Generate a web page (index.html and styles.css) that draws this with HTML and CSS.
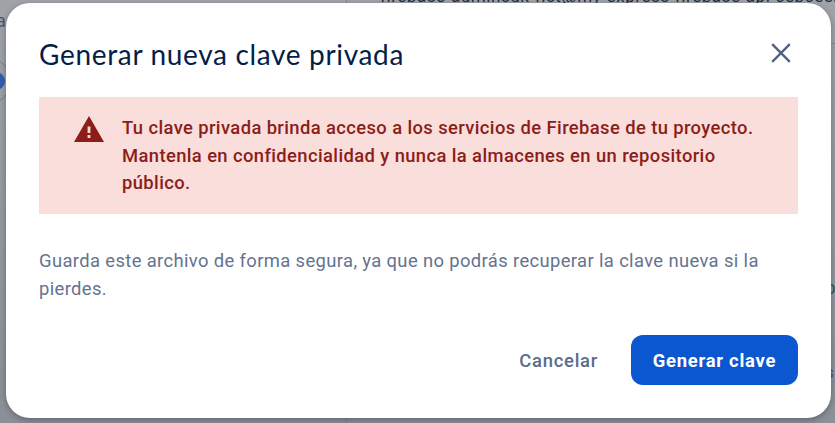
FILE: index.html
```html
<!DOCTYPE html>
<html lang="es">
<head>
<meta charset="utf-8">
<title>Generar nueva clave privada</title>
<link rel="stylesheet" href="styles.css">
</head>
<body>
<div class="page" aria-hidden="true">
  <span class="page-divider"></span>
  <span class="page-rule"></span>
  <span class="page-text page-nav">a</span>
  <span class="page-step"></span>
  <span class="page-text page-account">firebase-adminsdk-fict@my-express-firebase-api-cebceence</span>
  <span class="page-text page-code">o</span>
  <span class="page-text page-end">s</span>
</div>
<main class="dialog" role="dialog" aria-labelledby="title">
  <header class="dialog-header">
    <h1 class="title" id="title">Generar nueva clave privada</h1>
    <button class="close" aria-label="Cerrar">
      <svg width="20" height="20" viewBox="0 0 20 20"><path d="M1.2 1.2 18.8 18.8M18.8 1.2 1.2 18.8" fill="none" stroke="#506387" stroke-width="2.4"/></svg>
    </button>
  </header>
  <section class="alert">
    <svg class="alert-icon" width="30" height="26" viewBox="0 0 30 26"><path fill="#8c1d18" fill-rule="evenodd" d="M15 0 30 26H0ZM13.6 10.5V17H16.4V10.5ZM13.6 19V22H16.4V19Z"/></svg>
    <p class="alert-text">Tu clave privada brinda acceso a los servicios de Firebase de tu proyecto.<br>Mantenla en confidencialidad y nunca la almacenes en un repositorio<br>público.</p>
  </section>
  <p class="note">Guarda este archivo de forma segura, ya que no podrás recuperar la clave nueva si la<br>pierdes.</p>
  <footer class="actions">
    <button class="button">Cancelar</button>
    <button class="button button-primary">Generar clave</button>
  </footer>
</main>
</body>
</html>
```
FILE: styles.css
```css
* { box-sizing: border-box; }
body {
  margin: 0;
  height: 423px;
  padding: 3px 4px 5px 6px;
  overflow: hidden;
  position: relative;
  background: #969aa3;
  font-family: Roboto, "Liberation Sans", sans-serif;
}
h1, p { margin: 0; font-weight: 400; }
button { border: 0; padding: 0; background: none; font: inherit; }
.page { position: absolute; inset: 0; overflow: hidden; background: linear-gradient(#a0a3a8, #969aa3 45%, #8b8f98); }
.page-text { position: absolute; white-space: nowrap; }
.page-nav { left: -4px; top: 10px; font-size: 18px; color: #4b5769; }
.page-step { position: absolute; left: -37px; top: 57px; width: 48px; height: 48px; border: 1px solid #777d88; border-radius: 50%; }
.page-step::after { content: ""; position: absolute; right: 5px; top: 14px; width: 18px; height: 18px; border-radius: 50%; background: #315eae; }
.page-divider { position: absolute; left: 346px; top: 0; width: 1px; height: 100%; background: #7e858e; }
.page-rule { position: absolute; left: 347px; right: 0; top: 43px; height: 1px; background: #858991; }
.page-account { left: 380px; top: -14px; font-size: 17px; line-height: 20px; letter-spacing: 0.55px; color: #202f42; }
.page-code { left: 825px; top: 279px; font: 18px "Liberation Mono", monospace; color: #19616b; }
.page-end { left: 825px; top: 362px; font-size: 17px; color: #485970; }
.dialog {
  position: relative;
  height: 415px;
  padding: 32px 33px 33px;
  display: flex;
  flex-direction: column;
  background: #fff;
  border-radius: 24px;
  box-shadow: 0 2px 6px rgba(0, 0, 0, 0.3);
}
.dialog-header { display: flex; justify-content: space-between; height: 62px; }
.title { margin-top: -1px; font: 400 28px/40px Lato, sans-serif; letter-spacing: 0.67px; color: #041e49; }
.close { width: 20px; height: 20px; margin: 8px 7px 0 0; }
svg { display: block; }
.alert { display: flex; height: 117px; padding: 17px 35px; gap: 18px; background: #f9dedc; color: #8c1d18; }
.alert-icon { margin-top: 2px; flex: none; }
.alert-text { font-weight: 500; font-size: 18.4px; line-height: 27.5px; letter-spacing: 0.39px; white-space: nowrap; }
.note { margin-top: 33px; font-size: 18.4px; line-height: 28px; letter-spacing: 0.37px; color: #64738f; white-space: nowrap; }
.actions { margin-top: auto; display: flex; justify-content: flex-end; gap: 11px; }
.button { height: 50px; padding: 0 22px; border-radius: 12px; font-weight: 500; font-size: 18.4px; letter-spacing: 0.75px; color: #5a6c8d; }
.button-primary { width: 167px; padding: 0; background: #0b57d0; color: #fff; font-weight: 700; }
```
